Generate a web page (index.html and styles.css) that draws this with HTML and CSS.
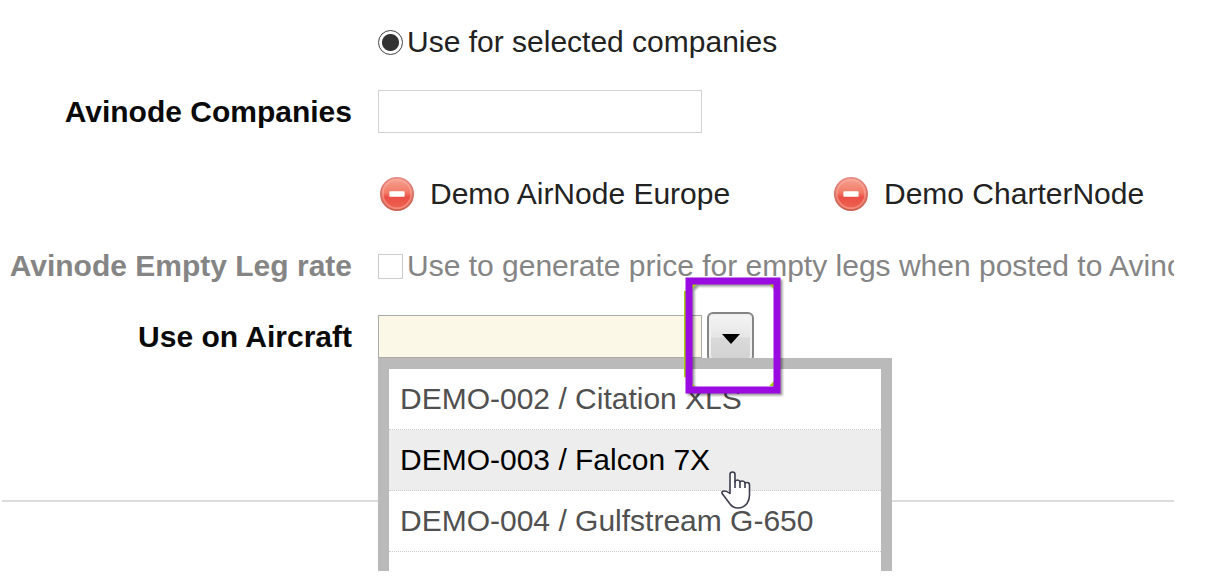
FILE: index.html
```html
<!DOCTYPE html>
<html lang="en">
<head>
  <meta charset="UTF-8">
  <meta name="viewport" content="width=device-width, initial-scale=1">
  <title>Price settings</title>
  <link rel="stylesheet" href="styles.css">
</head>

<body>

<svg class="defs" aria-hidden="true">
  <defs>
    <linearGradient id="red" x1="0" y1="0" x2="0" y2="1">
      <stop offset="0" stop-color="#f7a291"/>
      <stop offset="0.45" stop-color="#f27c69"/>
      <stop offset="0.6" stop-color="#ea5045"/>
      <stop offset="1" stop-color="#ee6553"/>
    </linearGradient>
    <linearGradient id="ring" x1="0" y1="0" x2="0" y2="1">
      <stop offset="0" stop-color="#e88a85"/>
      <stop offset="1" stop-color="#c9604f"/>
    </linearGradient>
    <symbol id="remove" viewBox="0 0 38 38">
      <circle cx="19" cy="19" r="17" fill="url(#red)" stroke="url(#ring)" stroke-width="2"/>
      <circle cx="19" cy="19" r="15" fill="none" stroke="#f9b3a5" stroke-width="2" opacity="0.5"/>
      <rect x="11" y="16" width="16" height="6" rx="1" fill="#fff"/>
    </symbol>
  </defs>
</svg>

<form class="settings">
  <div class="row row-radio">
    <div class="field">
      <input type="radio" id="selected" name="use" checked>
      <label for="selected">Use for selected companies</label>
    </div>
  </div>

  <div class="row row-companies">
    <label class="title" for="companies">Avinode Companies</label>
    <div class="field"><input type="text" class="text" id="companies"></div>
  </div>

  <div class="row row-list">
    <ul class="field companies">
      <li><button type="button" class="remove" aria-label="Remove"><svg><use href="#remove"/></svg></button>Demo AirNode Europe</li>
      <li><button type="button" class="remove" aria-label="Remove"><svg><use href="#remove"/></svg></button>Demo CharterNode</li>
    </ul>
  </div>

  <div class="row row-empty disabled">
    <label class="title" for="emptyleg">Avinode Empty Leg rate</label>
    <div class="field">
      <input type="checkbox" id="emptyleg" disabled>
      <label for="emptyleg">Use to generate price for empty legs when posted to Avinode</label>
    </div>
  </div>

  <div class="row row-aircraft">
    <label class="title" for="aircraft">Use on Aircraft</label>
    <div class="field combo">
      <input type="text" class="text active" id="aircraft">
      <div class="toggle-wrap">
        <button type="button" class="toggle" aria-label="Show aircraft">
          <svg width="20" height="12" viewBox="0 0 20 12"><path d="M1 1h18L10 11z" fill="#000"/></svg>
        </button>
        <svg class="marker" width="102" height="122" viewBox="0 0 102 122">
          <path d="M2 16V102" stroke="#a4d40c" stroke-width="2"/>
          <path d="M9 9h5l-5 5zM91 9h-5l5 5zM91 111h-5l5-5zM9 111h3l-3-3z" fill="#a4d40c"/>
          <rect x="6" y="6" width="88" height="109" fill="none" stroke="#9a0be2" stroke-width="7"/>
        </svg>
      </div>
      <ul class="menu">
        <li>DEMO-002 / Citation XLS</li>
        <li class="hover">DEMO-003 / Falcon 7X
          <svg class="pointer" width="32" height="40" viewBox="0 0 32 40">
            <path d="M10 23V4.500Q10 2 12.500 2T15 4.500V12Q15.500 10 17.500 10T20 12Q20.500 11 22.500 11T25 13Q25.500 12.500 27 12.500Q29.500 12.500 29.500 15V25Q29.500 30 27 33.500Q23.500 38 18 38Q13 38 10 34L4 26L2 23.500Q1.500 21 4.500 21Q7 21 10 23.500Z" fill="#fff" stroke="#3c3c4e" stroke-width="1.600" stroke-linejoin="round"/>
            <path d="M15 11V18M20 12V18M25 13V18" fill="none" stroke="#3c3c4e" stroke-width="1.600"/>
          </svg>
        </li>
        <li>DEMO-004 / Gulfstream G-650</li>
        <li></li>
      </ul>
    </div>
  </div>

  <hr>
</form>

</body>
</html>
```
FILE: styles.css
```css
* {
  box-sizing: border-box;
}
body {
  margin: 0;
  background: #fff;
  font-family: Arial, "Liberation Sans", sans-serif;
  font-size: 30px;
  line-height: 36px;
  color: #222;
}
ul {
  list-style: none;
  margin: 0;
  padding: 0;
}
.defs {
  position: absolute;
  width: 0;
  height: 0;
}
.settings {
  margin-right: 39px;
  padding: 24px 0 69px;
  overflow: hidden;
}

/* rows */
.row {
  display: grid;
  grid-template-columns: 352px minmax(0, 1fr);
  column-gap: 26px;
  align-items: center;
}
.title {
  text-align: right;
  font-weight: bold;
  color: #0a0a0a;
  white-space: nowrap;
}
.field {
  grid-column: 2;
  display: flex;
  align-items: center;
  white-space: nowrap;
}
.row-companies {
  margin-top: 30px;
}
.row-list {
  margin-top: 43px;
}
.row-empty {
  margin-top: 36px;
}
.row-aircraft {
  margin-top: 31px;
}
.disabled,
.disabled .title {
  color: #858585;
}

/* inputs */
input[type="radio"],
input[type="checkbox"] {
  appearance: none;
  flex: none;
  width: 25px;
  height: 25px;
  margin: 0 4px 0 0;
  border: 1px solid #444;
  background: #fff;
}
input[type="radio"] {
  border-radius: 50%;
  background: radial-gradient(circle, #333 8px, #fff 9px);
}
input[type="checkbox"] {
  border-color: #ccc;
}
.text {
  width: 324px;
  height: 43px;
  padding: 0 8px;
  border: 1px solid #d2d2d2;
  border-radius: 0;
  background: #fff;
  font: inherit;
}
.text.active {
  border-color: #aaa;
  background: #fcf8e8;
}

/* chosen companies */
.companies li {
  display: flex;
  align-items: center;
  flex: 0 0 454px;
}
.remove {
  width: 38px;
  height: 36px;
  margin-right: 14px;
  padding: 0;
  border: 0;
  background: none;
}
.remove svg {
  display: block;
  width: 38px;
  height: 36px;
}

/* aircraft combo */
.combo {
  position: relative;
  height: 43px;
}
.toggle-wrap {
  position: relative;
  align-self: flex-start;
  height: 43px;
  margin-left: 5px;
}
.toggle {
  display: flex;
  align-items: center;
  justify-content: center;
  width: 47px;
  height: 50px;
  margin-top: -3px;
  padding: 4px 0 0;
  border: 2px solid #858585;
  border-radius: 6px;
  background: linear-gradient(#f5f5f5, #e6e6e6 50%, #dadada 52%, #d2d2d2);
  box-shadow: inset 0 0 0 2px #f0f0f0;
}
.marker {
  position: absolute;
  z-index: 2;
  top: -40px;
  left: -24px;
  filter: drop-shadow(2px 2px 1px rgba(0, 0, 0, 0.4));
}
.menu {
  position: absolute;
  z-index: 1;
  top: 100%;
  left: 0;
  width: 514px;
  border: 11px solid #bababa;
  background: #fff;
  color: #505050;
}
.menu li {
  position: relative;
  height: 61px;
  padding-left: 11px;
  border-bottom: 1px dotted #ccc;
  line-height: 60px;
}
.menu .hover {
  background: #ededed;
  color: #000;
}
.pointer {
  position: absolute;
  z-index: 1;
  top: 40px;
  left: 331px;
}
hr {
  height: 2px;
  margin: 142px 0 0 2px;
  border: 0;
  background: #dcdcdc;
}
```
